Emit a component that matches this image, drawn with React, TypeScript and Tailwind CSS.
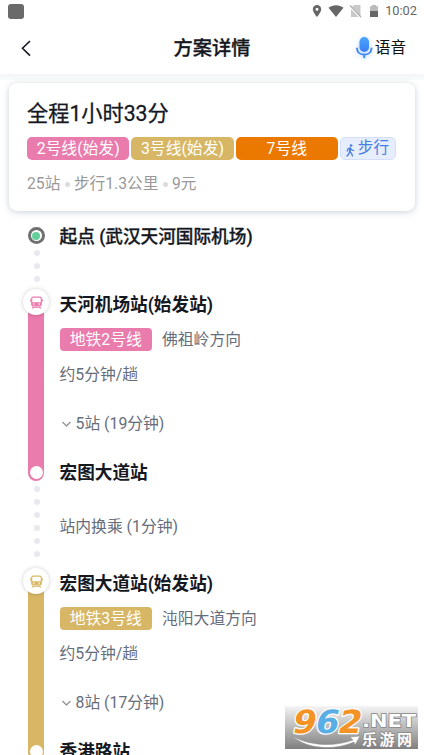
import React from "react";

function StatusBar() {
  return (
    <div className="flex h-[22px] shrink-0 items-center pr-[7px] pl-2 text-[#666]">
      <div className="h-[15px] w-4 rounded-[3px] bg-[#6a6a6a]" />
      <svg className="ml-auto" width="10" height="14" viewBox="0 0 10 14">
        <path fill="#666" fillRule="evenodd" d="M5 1a4.2 4.2 0 0 0-4.2 4.2C.8 8.300 5 13 5 13s4.200-4.700 4.200-7.800A4.200 4.200 0 0 0 5 1Zm0 2.700a1.500 1.500 0 1 1 0 3 1.500 1.500 0 0 1 0-3Z" />
      </svg>
      <svg className="ml-[6px]" width="16" height="14" viewBox="0 0 16 14">
        <path fill="#666" d="M.5 3.800C4.700.4 11.300.4 15.500 3.800L8 13Z" />
      </svg>
      <svg className="ml-[6px]" width="12" height="14" viewBox="0 0 12 14">
        <path fill="#c9c9c9" d="M4 1h6.500v12H1V4Z" />
        <path stroke="#fff" strokeWidth="2.200" d="M0 2l11 12" />
        <path stroke="#aaa" strokeWidth="1.200" d="M0 1.500l11 11.500" />
      </svg>
      <svg className="ml-[7px]" width="10" height="14" viewBox="0 0 10 14">
        <path fill="#bbb" d="M3 1h4v1.300h2V7.500H1V2.300h2Z" />
        <path fill="#666" d="M1 7h8v6H1Z" />
      </svg>
      <span className="ml-[6px] pt-px text-[12.800px] leading-none">10:02</span>
    </div>
  );
}

function Header() {
  return (
    <div className="grid h-[52px] shrink-0 grid-cols-3 items-center">
      <svg className="ml-5 -mt-px" width="12" height="18" viewBox="0 0 12 18" fill="none" stroke="#15181f" strokeWidth="1.600">
        <path d="M10 2 2.500 9.300 10 16.600" />
      </svg>
      <h1 className="pt-px text-center text-[19.200px] leading-none font-medium text-[#15181f] [-webkit-text-stroke:0.300px_#15181f]">方案详情</h1>
      <div className="flex items-center justify-end pr-[18px]">
        <svg className="drop-shadow-[0_1px_2px_#4595f866]" width="18" height="22" viewBox="0 0 18 22">
          <defs>
            <linearGradient id="mic" x1="0" y1="0" x2="0" y2="1">
              <stop offset="0" stopColor="#4ba5fa" />
              <stop offset="1" stopColor="#397ff5" />
            </linearGradient>
          </defs>
          <rect x="4.500" y="0" width="9.500" height="15" rx="4.750" fill="url(#mic)" />
          <path d="M2 11.500c.4 8.200 14.100 8.200 14.500 0M9.250 17.400v3" fill="none" stroke="#3e86f6" strokeWidth="1.900" strokeLinecap="round" />
        </svg>
        <span className="ml-[2px] pt-[2px] text-[15.600px] leading-none text-[#111]">语音</span>
      </div>
    </div>
  );
}

function SummaryCard() {
  const tag = "flex h-[23px] items-center justify-center rounded-[5px] text-[15.800px] leading-none text-white";
  return (
    <div className="mx-[9px] mt-[9px] h-[128px] shrink-0 rounded-lg bg-white px-[18px] shadow-[0_1px_6px_#53658a50]">
      <div className="h-[54px] pt-[20px] text-[21.200px] leading-[21px] text-[#15181f] [-webkit-text-stroke:0.300px_#15181f]">全程1小时33分</div>
      <div className="flex gap-[2px]">
        <div className={tag + " w-[102.300px] bg-[#ea7bad]"}>2号线(始发)</div>
        <div className={tag + " w-[102.300px] bg-[#d7b765]"}>3号线(始发)</div>
        <div className={tag + " w-[102.300px] bg-[#eb7900]"}>7号线</div>
        <div className="flex h-[23px] w-[56px] items-center justify-center rounded-[5px] border border-[#d3e0f8] bg-[#e6eefd] pr-px text-[15.600px] leading-none text-[#477ce5]">
          <svg className="mt-[3px] mr-[3px]" width="9" height="13" viewBox="0 0 9 13" fill="none" stroke="#477ce5" strokeWidth="1.300" strokeLinecap="round" strokeLinejoin="round">
            <circle cx="5" cy="1.500" r="1" fill="#477ce5" strokeWidth=".6" />
            <path strokeWidth="1.900" d="M4.200 4.600 3.800 7.500" />
            <path d="M1.200 7 2 4.800 4.300 3.800 5.200 5.600 7.500 6.500M3.600 7.700 5.500 9.200 6.500 12M3.500 8 2.800 10 1 12" />
          </svg>
          步行
        </div>
      </div>
      <div className="mt-[15px] flex items-center text-[15.700px] leading-[18px] text-[#999]">
        <span>25站</span>
        <i className="mx-[4.300px] size-[5px] rounded-full bg-[#ddd]" />
        <span>步行1.3公里</span>
        <i className="mx-[4.300px] size-[5px] rounded-full bg-[#ddd]" />
        <span>9元</span>
      </div>
    </div>
  );
}

function Dots({ count }: { count: number }) {
  return (
    <div className="ml-px flex flex-col items-center gap-[7px]">
      {Array.from({ length: count }, (_, i) => (
        <i key={i} className="size-[6px] rounded-full bg-[#e8e8ef]" />
      ))}
    </div>
  );
}

function Train({ color }: { color: string }) {
  return (
    <svg width="13" height="13" viewBox="0 0 13 13" className={color}>
      <rect x="1.700" y="1.100" width="9.600" height="8.800" rx="1.600" fill="none" stroke="currentColor" strokeWidth="1.200" />
      <path fill="currentColor" d="M2 6.300h9v3.300H2ZM.2 3.200h1v2.600h-1ZM11.800 3.200h1v2.600h-1ZM2.500 10.800h8l.8 1.700H9.700l-.4-.7H3.700l-.4.700H1.700Z" />
      <circle cx="3.800" cy="8" r=".8" fill="#fff" />
      <circle cx="9.200" cy="8" r=".8" fill="#fff" />
    </svg>
  );
}

type RideProps = {
  from: string;
  to: string;
  line: string;
  direction: string;
  stops: string;
  bg: string;
  color: string;
};

const heading = "text-[17.650px] leading-[20px] text-[#15181f]";

function Ride({ from, to, line, direction, stops, bg, color }: RideProps) {
  return (
    <section className="flex h-[192px] shrink-0">
      <div className="flex w-[26px] flex-col items-center">
        <div className="z-10 flex size-[26px] shrink-0 items-center justify-center rounded-full bg-white shadow-[0_0_4px_#0003]">
          <Train color={color} />
        </div>
        <div className={"-mt-[13px] flex w-4 flex-1 items-end justify-center rounded-b-full pb-[2px] " + bg}>
          <i className="size-[13px] rounded-full bg-white" />
        </div>
      </div>
      <div className="ml-[10.500px] text-[15.800px] leading-[20px] whitespace-nowrap text-[#666d7b]">
        <div className={"mt-[6px] font-bold " + heading}>{from}</div>
        <div className="mt-[13px] flex h-[23px] items-center">
          <span className={"flex h-[23px] w-[92.500px] items-center justify-center rounded-[4px] text-white " + bg}>{line}</span>
          <span className="ml-[10px]">{direction}</span>
        </div>
        <div className="mt-[14px]">约5分钟/趟</div>
        <div className="mt-[29px] flex items-center">
          <svg className="mr-[5px] ml-[2px]" width="9" height="7" viewBox="0 0 9 7" fill="none" stroke="#999" strokeWidth="1.500">
            <path d="M.5 1 4.500 5 8.500 1" />
          </svg>
          {stops}
        </div>
        <div className={"mt-[29px] font-bold " + heading}>{to}</div>
      </div>
    </section>
  );
}

function Watermark() {
  return (
    <div className="absolute top-[706px] left-[285px] h-[43px] w-[133px] bg-linear-to-b from-[#eeeeee99] to-[#808080]">
      <svg width="133" height="43" viewBox="0 0 133 43" className="overflow-visible font-['DejaVu_Sans','Noto_Sans_CJK_SC',sans-serif]">
        <g transform="translate(7 26.500) skewX(-12) scale(1.060 1)" fontSize="32" fontWeight="700" paintOrder="stroke" stroke="#fff" strokeWidth="2.500" strokeLinejoin="round">
          <text x="-1" y="0" fill="#f49325">9</text>
          <text x="20.500" y="0" fill="#58aee5">6</text>
          <text x="42" y="0" fill="#f49325">2</text>
        </g>
        <g fontWeight="700" fill="#fff" paintOrder="stroke" stroke="#888" strokeWidth="1.500">
          <text x="77" y="21" fontSize="18" textLength="54" lengthAdjust="spacingAndGlyphs">.NET</text>
          <text x="77" y="39" fontSize="15" textLength="50">乐游网</text>
        </g>
        <path d="M7 30c18 10 42 11 61 4l-3-3 10-1-5 9-1-3C48 45 22 43 7 30Z" fill="#fff" stroke="#888" strokeWidth=".5" />
      </svg>
    </div>
  );
}

export default function App() {
  return (
    <main className="relative flex h-[755px] w-[424px] flex-col overflow-hidden bg-white font-[Roboto,'Noto_Sans_CJK_SC',sans-serif]">
      <StatusBar />
      <Header />
      <div className="-mb-[6px] h-[6px] shrink-0 bg-linear-to-b from-[#f3f4f7] to-[#fafbfc]" />
      <SummaryCard />
      <div className="mt-[16px] ml-[23px] flex flex-col">
        <section className="flex h-[62px] shrink-0">
          <div className="flex w-[26px] flex-col items-center">
            <div className="mb-[6px] flex size-[17px] shrink-0 items-center justify-center rounded-full border-[3px] border-[#707070] bg-white">
              <i className="size-[8px] rounded-full bg-[#65cf9c]" />
            </div>
            <Dots count={3} />
          </div>
          <div className={"ml-[10.500px] font-medium [-webkit-text-stroke:0.300px_#15181f] " + heading}>起点 (武汉天河国际机场)</div>
        </section>
        <Ride from="天河机场站(始发站)" to="宏图大道站" line="地铁2号线" direction="佛祖岭方向" stops="5站 (19分钟)" bg="bg-[#ea7bad]" color="text-[#ea7bad]" />
        <section className="flex h-[87px] shrink-0 pt-[5px]">
          <div className="w-[26px]">
            <Dots count={6} />
          </div>
          <div className="mt-[31px] ml-[10.500px] text-[15.800px] leading-[20px] text-[#666d7b]">站内换乘 (1分钟)</div>
        </section>
        <Ride from="宏图大道站(始发站)" to="香港路站" line="地铁3号线" direction="沌阳大道方向" stops="8站 (17分钟)" bg="bg-[#d7b765]" color="text-[#d7b765]" />
      </div>
      <Watermark />
    </main>
  );
}
